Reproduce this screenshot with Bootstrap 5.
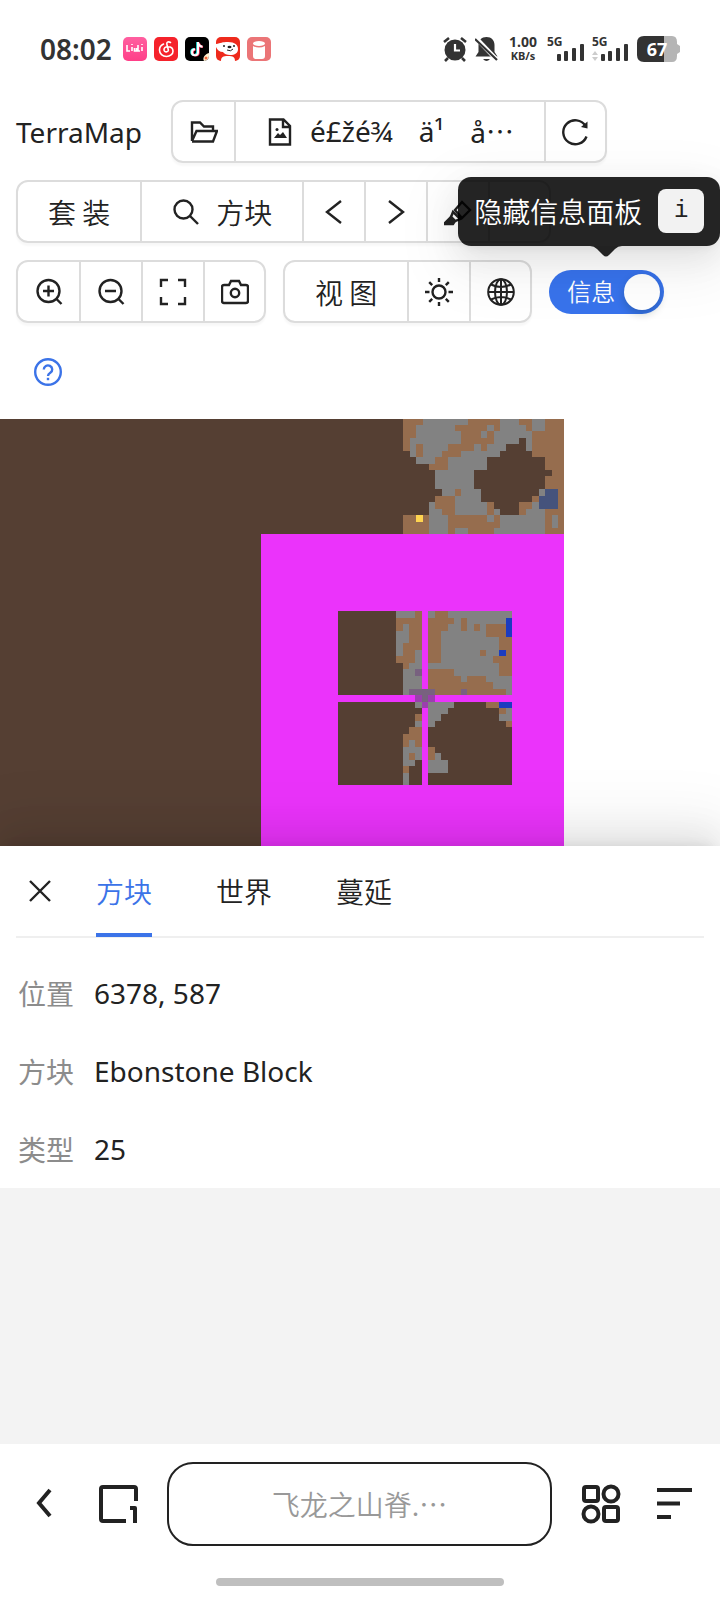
<!DOCTYPE html>
<html lang="zh-CN">
<head>
<meta charset="utf-8">
<meta name="viewport" content="width=device-width, initial-scale=1">
<title>TerraMap</title>
<link href="https://cdn.jsdelivr.net/npm/bootstrap@5.3.0/dist/css/bootstrap.min.css" rel="stylesheet">
<style>
  body { font-family: "Noto Sans", "Noto Sans CJK SC", sans-serif; font-size: 28px; line-height: 40px; color: #222; background: #fff; }
  svg { display: block; flex: none; }
  .cjk { font-family: "Noto Sans CJK SC", sans-serif; font-weight: 350; }
  .line-icon { width: 28px; height: 28px; fill: none; stroke: #222; stroke-width: 2.4; }
  .line-icon.fine { stroke-width: 2; }

  .status-bar { height: 84px; padding: 14px 40px 0; color: #333; }
  .clock { font-family: "Noto Sans", sans-serif; font-weight: 600; }
  .app-icons { gap: 7px; margin-left: 11px; }
  .status-icons { gap: 8px; }
  .net-speed { font-size: 14px; line-height: 14px; font-weight: 700; text-align: center; width: 32px; }
  .net-unit { font-size: 11px; }
  .status-icons text { font-family: "Noto Sans", sans-serif; font-weight: 700; }

  .toolbar { padding: 16px 16px 16px; gap: 17px; }
  .toolbar .brand { margin-right: 12px; }
  .tool-group { height: 63px; border: 2px solid #dcdcdc; border-radius: 12px; box-shadow: 0 3px 2px rgba(0,0,0,.03); }
  .tool-group .btn { min-width: 62px; padding: 0; border: 0; border-radius: 0; font-size: 28px; line-height: 40px; color: #222; display: flex; align-items: center; justify-content: center; }
  .tool-group .btn:first-child, .tool-group .btn:last-child { min-width: 61px; }
  .tool-group .btn + .btn { border-left: 2px solid #dcdcdc; }
  .tool-group .btn.wide { padding: 0 30px; gap: 16px; }
  .tool-group .file-name { gap: 26px; }
  .help-link { width: 63px; height: 63px; }
  .help-link svg { stroke: #3b73e8; }

  .info-switch { display: grid; width: 115px; height: 44px; cursor: pointer; }
  .info-switch > * { grid-area: 1 / 1; }
  .info-switch input { appearance: none; width: 100%; height: 44px; margin: 0; border-radius: 22px; background: #3873ec; display: flex; align-items: center; justify-content: flex-end; padding: 0 4px; }
  .info-switch input::before { content: ""; width: 36px; height: 36px; border-radius: 50%; background: #fff; box-shadow: 0 4px 8px rgba(0,35,11,.2); }
  .info-switch span { z-index: 1; color: #fff; font-size: 24px; line-height: 42px; padding-left: 18px; }
  .hint { right: -56px; bottom: 68px; width: max-content; height: 69px; padding: 0 16px; gap: 16px; border-radius: 13px; background: rgba(0,0,0,.86); color: #fff; z-index: 5;
    box-shadow: 0 12px 32px rgba(0,0,0,.08), 0 6px 12px -8px rgba(0,0,0,.12), 0 18px 56px 16px rgba(0,0,0,.05); }
  .hint kbd { width: 46px; height: 44px; padding: 0; border-radius: 8px; background: #f2f2f2; color: #222; font: 24px/44px "Liberation Mono", monospace; text-align: center; }
  .hint-arrow { right: 98px; top: 100%; }

  .map-view { background: #fff; }
  .map-view svg { width: 78.4%; }

  .info-panel { background: #fff; box-shadow: 0 -12px 32px rgba(0,0,0,.08), 0 -6px 12px -8px rgba(0,0,0,.12), 0 -18px 56px 16px rgba(0,0,0,.05); }
  .panel-tabs { height: 92px; margin: 0 16px; border-bottom: 2px solid #efefef; }
  .panel-tabs .close-btn { width: 48px; margin-right: 32px; }
  .panel-tabs .nav { gap: 64px; }
  .panel-tabs .nav-link { padding: 0; line-height: 92px; height: 92px; color: #222; border-radius: 0; }
  .panel-tabs .nav-link.active { color: #3b73e8; border-bottom: 4px solid #3b73e8; }
  .facts { padding: 16px 18px 0; margin: 0; }
  .facts > div { height: 78px; gap: 20px; }
  .facts dt { font-weight: 400; color: #8c8c8c; }
  .backdrop-area { background: #f3f3f3; }

  .browser-bar { padding: 18px 27px 0 26px; }
  .browser-bar .btn { padding: 0; border: 0; }
  .browser-bar .side-btns { gap: 36px; }
  .browser-bar .address { height: 84px; border: 2px solid #222; border-radius: 26px; font-size: 28px; color: #999; margin: 0 29px; }
  .home-bar { width: 40%; height: 8px; border-radius: 4px; background: #bfbfbf; margin: 32px auto 14px; }
</style>
</head>
<body>
<div class="min-vh-100 d-flex flex-column overflow-hidden">

  <header class="status-bar d-flex align-items-center">
    <span class="clock">08:02</span>
    <div class="app-icons d-flex">
      <svg width="24" height="24" viewBox="0 0 24 24"><defs><linearGradient id="pk" x2="0" y2="1"><stop stop-color="#ff5fa0"/><stop offset="1" stop-color="#ff3f88"/></linearGradient></defs><rect width="24" height="24" rx="5" fill="url(#pk)"/><path d="M4 8v6h3M9 10v4M11.500 11v3h2v-3M15 8v6h2M19 10v4M9 7v1M19 7v1" fill="none" stroke="#fff" stroke-width="1.600"/></svg>
      <svg width="24" height="24" viewBox="0 0 24 24"><rect width="24" height="24" rx="5" fill="#f5222b"/><path d="M16.500 5.500c-2.500-1.500-4.200 0-3.600 2l1.400 5.200c.6 2.600-4.300 3.200-4.300 0 0-2 2-3 4-3 3.500 0 5 2.300 5 4.500 0 3-3 5.300-6.500 5.300-4 0-7-2.700-7-6.500 0-3 1.700-5 4-6" fill="none" stroke="#fff" stroke-width="1.600" stroke-linecap="round"/></svg>
      <svg width="24" height="24" viewBox="0 0 24 24"><rect width="24" height="24" rx="5" fill="#000"/><path d="M12.300 5v10a3 3 0 1 1-3-3M12.300 5.500c.4 2.500 2 3.700 4.700 4" fill="none" stroke="#25f4ee" stroke-width="2.200"/><path d="M13.700 5.500v10a3 3 0 1 1-3-3M13.700 6c.4 2.500 2 3.700 4.300 4" fill="none" stroke="#fe2c55" stroke-width="2.200"/><path d="M13 5v10.500a3 3 0 1 1-3-3.200M13 5.500c.4 2.500 2 3.900 4.500 4.200" fill="none" stroke="#fff" stroke-width="2"/><path d="M24 16v3a5 5 0 0 1-5 5c-2-3 1-7 5-8z" fill="#fff1d0"/><circle cx="21" cy="21" r="1.500" fill="#f5653a"/></svg>
      <svg width="24" height="24" viewBox="0 0 24 24"><rect width="24" height="24" rx="5" fill="#ee2a1c"/><path d="M0 7c5-1 6-2 12-2 7 0 10 3 10 7 0 4-3 6-8 6-3 0-6-1-7-3-3 0-6-2-7-5zM5 24c0-4 2-5 7-5s7 1 7 5z" fill="#fff"/><ellipse cx="13.500" cy="10" rx="2" ry="1.200" fill="#222"/><circle cx="8" cy="9" r="1" fill="#222"/><circle cx="18" cy="9" r="1" fill="#222"/><path d="M11 13q4 2 6-1" fill="none" stroke="#222"/></svg>
      <svg width="24" height="24" viewBox="0 0 24 24"><rect width="24" height="24" rx="5" fill="#eb7577"/><path d="M6 9q6 3 12 0v10q0 3-3 3H9q-3 0-3-3z" fill="#fff"/><ellipse cx="12" cy="6.500" rx="6" ry="2.600" fill="#fff"/></svg>
    </div>
    <div class="status-icons d-flex align-items-center ms-auto">
      <svg width="24" height="26" viewBox="0 0 24 26"><circle cx="12" cy="14" r="10.500" fill="#333"/><path d="M12 8v6.500h5" fill="none" stroke="#fff" stroke-width="2.200"/><path d="M1 6l5-4M23 6l-5-4M5 22l-3 3M19 22l3 3" stroke="#333" stroke-width="2.600"/></svg>
      <svg width="24" height="26" viewBox="0 0 24 26"><path d="M11.500 1c5 0 8 3.500 8 8v7l3 4.500h-22l3-4.500V9c0-4.500 3-8 8-8z" fill="#333"/><path d="M8 23h7q-3.500 4-7 0z" fill="#333"/><path d="M1 2l21 22" stroke="#fff" stroke-width="4.500"/><path d="M0 3l22 21" stroke="#333" stroke-width="2.200"/></svg>
      <div class="net-speed">1.00<div class="net-unit">KB/s</div></div>
      <svg width="37" height="34" viewBox="0 -4 37 34" fill="#333"><text x="0" y="10" font-size="12">5G</text><rect x="10" y="18" width="4" height="7" rx="1"/><rect x="17" y="15" width="4" height="10" rx="1"/><rect x="25" y="12" width="4" height="13" rx="1"/><rect x="33" y="8" width="4" height="17" rx="1"/></svg>
      <svg width="37" height="34" viewBox="0 -4 37 34" fill="#333"><text x="0" y="10" font-size="12">5G</text><path d="M0 19l3-4 3 4zM0 21h6l-3 4z" fill="#ccc"/><rect x="9" y="18" width="4" height="7" rx="1"/><rect x="16" y="15" width="4" height="10" rx="1"/><rect x="24" y="12" width="4" height="13" rx="1"/><rect x="32" y="8" width="4" height="17" rx="1"/></svg>
      <svg width="43" height="26" viewBox="0 0 43 26"><path d="M27 0h8q5 0 5 6v2l3 2v6l-3 2v2q0 6-5 6h-8z" fill="#b5b5b5"/><path d="M27 0H7Q0 0 0 7v12q0 7 7 7h20z" fill="#333"/><text x="20" y="20" font-size="18" text-anchor="middle" fill="#fff">67</text></svg>
    </div>
  </header>

  <nav class="toolbar d-flex flex-wrap align-items-center">
    <span class="brand">TerraMap</span>
    <div class="tool-group d-flex">
      <button class="btn" aria-label="打开"><svg class="line-icon" viewBox="0 0 28 28"><path d="M2 23V4.500h8l4 4h9V13M2 23l4.500-10H27l-4 10.500H2"/></svg></button>
      <button class="btn wide"><svg class="line-icon" viewBox="0 0 28 28"><path d="M4 1.500h13.500L24 8v18.500H4zM17 2v7h7"/><path d="M8 20l4-5 2 2 3-3 4 6z" fill="#222" stroke="none"/><circle cx="11" cy="11.500" r="1.500" fill="#222" stroke="none"/></svg><span class="file-name d-flex"><span>é£žé¾</span><span>ä¹</span><span>å<span class="cjk">…</span></span></span></button>
      <button class="btn" aria-label="刷新"><svg class="line-icon" viewBox="0 0 28 28"><path d="M25.500 18.500A12 12 0 1 1 24.500 8"/><path d="M26.500 3.500v7l-6.500-1.500z" fill="#222" stroke="none"/></svg></button>
    </div>
    <div class="tool-group d-flex">
      <button class="btn wide cjk">套 装</button>
      <button class="btn wide cjk"><svg class="line-icon" viewBox="0 0 28 28"><circle cx="11.500" cy="11.500" r="9"/><path d="M18 18l8 8"/></svg>方块</button>
      <button class="btn" aria-label="上一个"><svg class="line-icon" viewBox="0 0 28 28"><path d="M21 3L7 14l14 11"/></svg></button>
      <button class="btn" aria-label="下一个"><svg class="line-icon" viewBox="0 0 28 28"><path d="M7 3l14 11L7 25"/></svg></button>
      <button class="btn" aria-label="高亮"><svg class="line-icon" viewBox="0 0 28 28"><path d="M11 12l7-8 8 8-8 8zM9 14l-2 5 4 4 5-2z"/><path d="M0 26l7-7 4 4-2 3z" fill="#222"/></svg></button>
      <button class="btn" aria-label="更多"><svg class="line-icon" viewBox="0 0 28 28"><path d="M7 10l7 8 7-8"/></svg></button>
    </div>
    <div class="tool-group d-flex">
      <button class="btn" aria-label="放大"><svg class="line-icon" viewBox="0 0 28 28"><circle cx="13.500" cy="13" r="11"/><path d="M8 13h11M13.500 7.500v11M21 20.500l5.500 5.500"/></svg></button>
      <button class="btn" aria-label="缩小"><svg class="line-icon" viewBox="0 0 28 28"><circle cx="13.500" cy="13" r="11"/><path d="M8 13h11M21 20.500l5.500 5.500"/></svg></button>
      <button class="btn" aria-label="适应窗口"><svg class="line-icon" viewBox="0 0 28 28"><path d="M2 9V2h7M19 2h7v7M2 19v7h7M19 26h7v-7"/></svg></button>
      <button class="btn" aria-label="截图"><svg class="line-icon" viewBox="0 0 28 28"><path d="M3 7h5l2-4h8l2 4h5q2 0 2 2v14q0 2-2 2H3q-2 0-2-2V9q0-2 2-2z"/><circle cx="14" cy="15" r="4.200"/></svg></button>
    </div>
    <div class="tool-group d-flex">
      <button class="btn wide cjk">视 图</button>
      <button class="btn" aria-label="亮度"><svg class="line-icon" viewBox="0 0 28 28"><circle cx="14" cy="14" r="6.500"/><path d="M14 0v4M14 24v4M0 14h4.500M23.500 14H28M4.200 4.200l3 3M20.800 20.800l3 3M4.200 23.800l3-3M20.800 7.200l3-3"/></svg></button>
      <button class="btn" aria-label="语言"><svg class="line-icon fine" viewBox="0 0 28 28"><circle cx="14" cy="14" r="12.800"/><ellipse cx="14" cy="14" rx="6" ry="12.800"/><path d="M14 1v26M1 14h26M4 6.500q10 5 20 0M4 21.500q10-5 20 0"/></svg></button>
    </div>
    <div class="position-relative">
      <label class="info-switch cjk"><input type="checkbox" role="switch" checked><span>信息</span></label>
      <div class="hint cjk position-absolute d-flex align-items-center" role="tooltip">隐藏信息面板<kbd>i</kbd>
        <svg class="hint-arrow position-absolute" width="32" height="12" viewBox="0 0 32 12"><path d="M0 0q4 0 7 3l6 6q3 3 6 0l6-6q3-3 7-3z" fill="#222"/></svg>
      </div>
    </div>
    <a href="#help" class="help-link d-flex align-items-center justify-content-center" aria-label="帮助"><svg class="line-icon" viewBox="0 0 28 28"><circle cx="14" cy="14" r="12.800"/><path d="M9.800 11.500a4.200 4 0 1 1 6.500 3.300q-2.300 1.400-2.300 3.200"/><path d="M14 19.800v2.400"/></svg></a>
  </nav>

  <main class="map-view">
    <svg id="map" viewBox="0 0 87.5 66.2" shape-rendering="crispEdges" role="img" aria-label="世界地图"></svg>
  </main>

  <section class="info-panel position-relative">
    <div class="panel-tabs d-flex align-items-center">
      <button class="btn close-btn p-0 border-0 d-flex justify-content-center" aria-label="关闭"><svg class="line-icon" viewBox="0 0 28 28"><path d="M4 4l20 20M24 4L4 24"/></svg></button>
      <div class="nav cjk">
        <a class="nav-link active" href="#tile">方块</a>
        <a class="nav-link" href="#world">世界</a>
        <a class="nav-link" href="#spread">蔓延</a>
      </div>
    </div>
    <dl class="facts">
      <div class="d-flex align-items-center"><dt class="cjk">位置</dt><dd class="mb-0">6378, 587</dd></div>
      <div class="d-flex align-items-center"><dt class="cjk">方块</dt><dd class="mb-0">Ebonstone Block</dd></div>
      <div class="d-flex align-items-center"><dt class="cjk">类型</dt><dd class="mb-0">25</dd></div>
    </dl>
  </section>
  <div class="backdrop-area position-relative flex-grow-1"></div>

  <footer>
    <div class="browser-bar d-flex align-items-center">
      <div class="side-btns d-flex">
        <button class="btn" aria-label="后退"><svg width="36" height="40" viewBox="0 0 36 40" fill="none" stroke="#222" stroke-width="4"><path d="M24 6L13 19l11 13"/></svg></button>
        <button class="btn" aria-label="标签页"><svg width="40" height="40" viewBox="0 0 40 40" fill="none" stroke="#222" stroke-width="4"><path d="M28 37H5q-2 0-2-2V5q0-2 2-2h31q2 0 2 2v12M32 24h5V39" stroke-linejoin="round"/></svg></button>
      </div>
      <button class="btn address cjk flex-grow-1">飞龙之山脊.…</button>
      <div class="side-btns d-flex">
        <button class="btn" aria-label="应用"><svg width="40" height="40" viewBox="0 0 40 40" fill="none" stroke="#222" stroke-width="4"><rect x="3" y="3" width="14" height="14" rx="2"/><circle cx="30" cy="10" r="7.500"/><circle cx="10" cy="30" r="7.500"/><rect x="23" y="23" width="14" height="14" rx="2"/></svg></button>
        <button class="btn" aria-label="菜单"><svg width="36" height="40" viewBox="0 0 36 40" stroke="#222" stroke-width="4"><path d="M0 6h35M0 19.500h23M0 33h14"/></svg></button>
      </div>
    </div>
    <div class="home-bar"></div>
  </footer>
</div>

<script src="https://cdn.jsdelivr.net/npm/bootstrap@5.3.0/dist/js/bootstrap.bundle.min.js"></script>
<script>
  // Tile colours: D cave wall, B dirt, G stone, S deep water, U water, Y gold, P ebonstone, M highlight
  const colors = { D: '#553f33', B: '#966d4e', G: '#828282', S: '#45537c', U: '#1c3cc0', Y: '#ffd450', P: '#78617f', Q: '#9b3fae', M: '#eb33fb' };
  const surface = [
    'BBBGGGGGGGBBBBBGGGBBGGBBB', 'BBGGGGGGBBBBBGBGGGGBGGBBB', 'BBGGGGGGGBBBGBGGGGGGBBBBB',
    'BGGGGGGGGBBBBBGGGGDGBBBBB', 'BGBGGGGBBBBGBGGGDDDGBBBBB', 'DGBGGGBBBGGGGGGDDDDDBBBBB',
    'DDGGGBBGGGGGGDDDDDDDDDBBB', 'DDDDBBBGGGGGGDDDDDDDDDBBB', 'DDDDDGGGGGGDDDDDDDDDDDDBB',
    'DDDDDGGGGGGDDDDDDDDDDDBBB', 'DDDDDGGGGGGDDDDDDDDDDDBBB', 'DDDDDDGGBGGGDDDDDDDDDGSSB',
    'DDDDDBBBGGGGDDDDDDDDBSSSB', 'DDDDGBBBGGGGGBDDDDBBGSSSB', 'DDDDGGBBGGGGGBGDDDBGGGBBB',
    'BBYBGGGBBBBBBGBGGGGGGGBGB', 'BBBBGGGBBBBBBBBGGGGGGGBGB', 'BBBBGGGBGGBBBBGGGGGGGGBBB'];
  const target = [
    'GGGBMGBBGGGGGGGGGG', 'BBBBMBBBBGBGGGGGGU', 'BGBBMBBBGGBGBGBBBU', 'GGBBMBBGGGGGGGBBBU',
    'GGBBMBBGGGGGGGGGBB', 'GBBBMBBGGGGGGGGGBB', 'GBBGMBBGGGGGGBGGUB', 'BBBGMBBGGGGGGGGBBB',
    'DBGGMGGGGGGGGGGGBB', 'DGGPMBBBBGGGGGGGBB', 'DGGGMBBBBBGBBBGGGG', 'DGGGMBBBBBBBBBBGGG',
    'DGPPPPBBBBPBBBBBBG', 'MMMQPQMMMMMMMMMMMM', 'DDDGQGGGGDDDDDBBUU', 'DDDDMGGGDDDDDDDDBG',
    'DDDBMGGDDDDDDDDDGG', 'DDDGMGDDDDDDDDDDDB', 'DDBBMDDDDDDDDDDDDD', 'DBBBMDDDDDDDDDDDDD',
    'DBGBMDDDDDDDDDDDDD', 'DGGGMBDDDDDDDDDDDD', 'DGBGMBGDDDDDDDDDDD', 'DGGDMGGGDDDDDDDDDD',
    'DBDDMGGGDDDDDDDDDD', 'DGDDMDDDDDDDDDDDDD', 'DGDDMDDDDDDDDDDDDD'];
  const map = document.getElementById('map');
  function box(x, y, w, h, key) {
    const r = document.createElementNS('http://www.w3.org/2000/svg', 'rect');
    Object.entries({ x, y, width: w, height: h, fill: colors[key] }).forEach(([k, v]) => r.setAttribute(k, v));
    map.append(r);
  }
  function tiles(rows, x, y) {
    rows.forEach((row, j) => { for (const run of row.matchAll(/(.)\1*/g)) box(x + run.index, y + j, run[0].length, 1, run[1]); });
  }
  box(0, 0, 87.5, 67, 'D');
  box(40.5, 17.9, 47, 49, 'M');
  box(52.4, 29.8, 13, 13, 'D');
  box(52.4, 43.8, 13, 13, 'D');
  tiles(surface, 62.5, -0.1);
  tiles(target, 61.4, 29.8);
</script>
</body>
</html>
